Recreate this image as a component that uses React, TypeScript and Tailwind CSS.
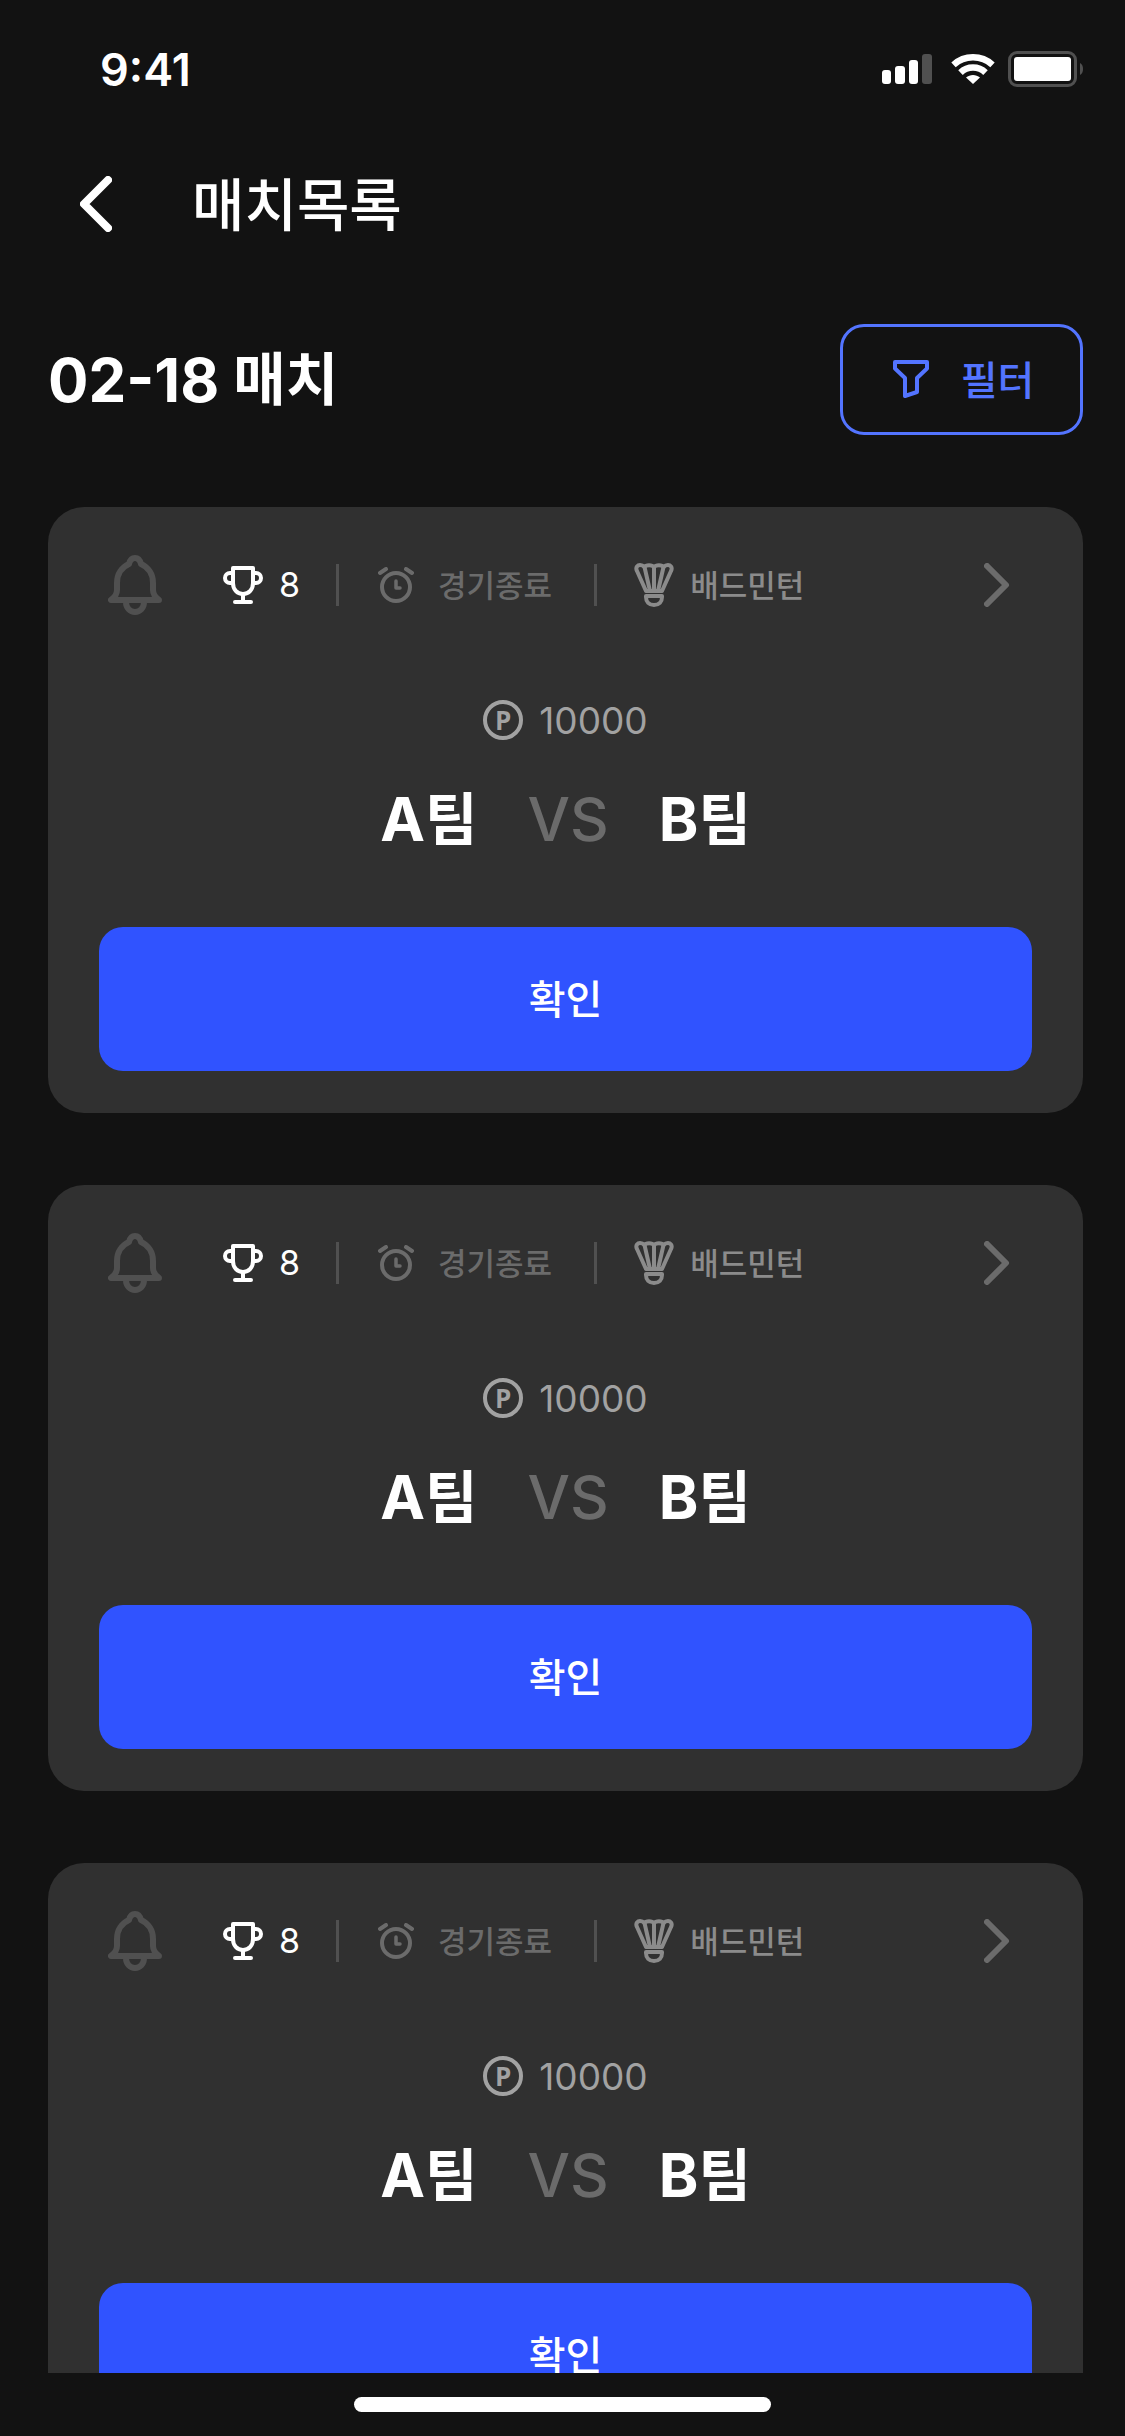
import type { ReactNode } from "react";

const matches = [
    { id: 1, rank: 8, status: "경기종료", sport: "배드민턴", point: 10000, home: "A", away: "B" },
    { id: 2, rank: 8, status: "경기종료", sport: "배드민턴", point: 10000, home: "A", away: "B" },
    { id: 3, rank: 8, status: "경기종료", sport: "배드민턴", point: 10000, home: "A", away: "B" },
];

type Match = (typeof matches)[number];

const SignalIcon = () => (
    <svg width="50" height="30" viewBox="0 0 50 30" fill="white">
        <rect x="0" y="16" width="9" height="14" rx="3" />
        <rect x="13" y="12" width="10" height="18" rx="3" />
        <rect x="27" y="6" width="9" height="24" rx="3" />
        <rect x="40" y="0" width="10" height="30" rx="3" fill="#505050" />
    </svg>
);

const WifiIcon = () => (
    <svg width="44" height="30" viewBox="0 0 44 30" fill="none" stroke="white" strokeWidth="6.500">
        <path d="M2.500 10.800C13.500 0.800 30.500 0.800 41.500 10.800" />
        <path d="M9.500 18.600C16.500 11.900 27.500 11.900 34.500 18.600" />
        <path d="M22 30L15 23.500C19 20 25 20 29 23.500Z" fill="white" stroke="none" />
    </svg>
);

const BatteryIcon = () => (
    <svg width="75" height="36" viewBox="0 0 75 36" fill="none">
        <rect x="1.500" y="1.500" width="66" height="33" rx="7.500" stroke="#505050" strokeWidth="3" />
        <rect x="6" y="6" width="57" height="24" rx="3" fill="white" />
        <path d="M72 12C74 13 75 15 75 18S74 23 72 24Z" fill="#505050" />
    </svg>
);

const BackIcon = () => (
    <svg width="32" height="56" viewBox="0 0 32 56" fill="none" stroke="white" strokeWidth="8" strokeLinecap="round" strokeLinejoin="round">
        <path d="M28 4L4 28L28 52" />
    </svg>
);

const FilterIcon = () => (
    <svg width="36" height="39" viewBox="0 0 36 39" fill="none" stroke="currentColor" strokeWidth="4" strokeLinejoin="round">
        <path d="M2 2H34V8.500L24 18V32L12 36V18L2 8.500Z" />
    </svg>
);

const BellIcon = () => (
    <svg width="54" height="60" viewBox="0 0 54 60" fill="none" stroke="#505050" strokeWidth="6" strokeLinejoin="round">
        <path d="M3 45H51C47 42 45 39 45 35V28C45 19 40 12 33 9C32 5 30 3 27 3S22 5 21 9C14 12 9 19 9 28V35C9 39 7 42 3 45Z" />
        <path d="M18 47C18 53 22 57 27 57S36 53 36 47" />
    </svg>
);

const TrophyIcon = () => (
    <svg width="40" height="38" viewBox="0 0 40 38" fill="none" stroke="white" strokeWidth="4" strokeLinecap="round" strokeLinejoin="round">
        <path d="M10 2H30V17C30 23.500 26 28 20 28S10 23.500 10 17Z" />
        <path d="M10 7H7A5 5 0 0 0 7 17H10" />
        <path d="M30 7H33A5 5 0 0 1 33 17H30" />
        <path d="M20 28V36M12 36H28" />
    </svg>
);

const AlarmIcon = () => (
    <svg width="36" height="36" viewBox="0 0 36 36" fill="none" stroke="#6b6b6b" strokeWidth="4" strokeLinecap="round" strokeLinejoin="round">
        <circle cx="18" cy="20" r="14" />
        <path d="M18 14V21H22" strokeWidth="3.500" />
        <path d="M2 6L8 2M28 2L34 6" />
    </svg>
);

const ShuttlecockIcon = () => (
    <svg width="40" height="46" viewBox="0 0 40 46" fill="none" stroke="#8b8b8b" strokeWidth="4" strokeLinecap="round" strokeLinejoin="round">
        <path d="M12 29L3 9C1 5 4 3 6 3C8 3 9.500 4 10.500 5C12 2.500 18 2.500 20 5C22 2.500 28 2.500 29.500 5C30.500 4 32 3 34 3C36 3 39 5 37 9L28 29Z" />
        <path d="M10.500 5L16 29M20 5V29M29.500 5L24 29" />
        <path d="M12 34H28V35C28 40 25 43 20 43S12 40 12 35Z" />
    </svg>
);

const NextIcon = () => (
    <svg width="26" height="44" viewBox="0 0 26 44" fill="none" stroke="#6b6b6b" strokeWidth="6" strokeLinecap="round" strokeLinejoin="round">
        <path d="M3 3L22 22L3 41" />
    </svg>
);

const Divider = () => <span className="h-[42px] w-[3px] shrink-0 bg-[#505050]" />;

const Team = ({ children }: { children: ReactNode }) => (
    <span className="flex items-center text-white font-bold">
        <span className="text-[60px]">{children}</span>
        <span className="text-[57px]">팀</span>
    </span>
);

const MatchCard = ({ match }: { match: Match }) => (
    <article className="shrink-0 rounded-[36px] bg-[#303030] px-[51px] pt-12 pb-[42px]">
        <div className="flex h-[60px] items-center pl-[9px] pr-[22px]">
            <button type="button" aria-label="알림">
                <BellIcon />
            </button>
            <div className="ml-[61px] mr-9 flex items-center gap-4 text-[34px] text-white">
                <TrophyIcon />
                <span className="font-['Inter',sans-serif]">{match.rank}</span>
            </div>
            <Divider />
            <div className="ml-[39px] mr-[42px] flex items-center gap-6 text-[31px] font-medium text-[#6b6b6b]">
                <AlarmIcon />
                <span>{match.status}</span>
            </div>
            <Divider />
            <div className="ml-[37px] flex items-center gap-4 text-[31px] font-medium text-[#8b8b8b]">
                <ShuttlecockIcon />
                <span>{match.sport}</span>
            </div>
            <button type="button" aria-label="상세보기" className="ml-auto">
                <NextIcon />
            </button>
        </div>

        <div className="mt-[84px] flex h-[42px] items-center justify-center gap-4 text-[37px] text-[#a2a2a2]">
            <span className="flex size-10 items-center justify-center rounded-full border-4 border-[#a2a2a2] text-[26px] font-bold">
                P
            </span>
            <span className="font-['Inter',sans-serif]">{match.point}</span>
        </div>

        <div className="mt-12 flex h-[60px] items-center justify-center gap-[50px] font-['Inter','Noto_Sans_CJK_KR',sans-serif]">
            <Team>{match.home}</Team>
            <span className="text-[60px] font-medium text-[#6b6b6b]">VS</span>
            <Team>{match.away}</Team>
        </div>

        <button type="button" className="mt-[78px] h-36 w-full rounded-3xl bg-[#3053ff] text-[40px] font-medium text-white">
            확인
        </button>
    </article>
);

const App = () => {
    return (
        <div className="flex h-screen flex-col overflow-hidden bg-[#121212] font-['Open_Sans','Noto_Sans_CJK_KR',sans-serif] leading-none text-white">
            <div className="flex h-[138px] shrink-0 items-center justify-between pl-[100px] pr-[42px]">
                <span className="font-['Inter',sans-serif] text-[45px] font-semibold">9:41</span>
                <div className="flex items-center">
                    <SignalIcon />
                    <span className="ml-[19px] mr-[13px]">
                        <WifiIcon />
                    </span>
                    <BatteryIcon />
                </div>
            </div>

            <header className="flex h-[132px] shrink-0 items-center gap-20 pl-20">
                <button type="button" aria-label="뒤로">
                    <BackIcon />
                </button>
                <h1 className="text-[57px] font-medium">매치목록</h1>
            </header>

            <main className="flex min-h-0 flex-1 flex-col overflow-hidden pl-12 pr-[42px] pt-[54px]">
                <div className="flex items-center justify-between">
                    <h2 className="flex items-center gap-3.5 font-['Inter','Noto_Sans_CJK_KR',sans-serif] font-bold">
                        <span className="text-[60px]">02-18</span>
                        <span className="text-[57px]">매치</span>
                    </h2>
                    <button
                        type="button"
                        className="flex h-[111px] w-[243px] items-center justify-center gap-8 rounded-3xl border-3 border-[#5374ff] pl-1 text-[40px] font-medium text-[#5374ff]"
                    >
                        <FilterIcon />
                        필터
                    </button>
                </div>
                <div className="mt-[72px] flex flex-col gap-[72px]">
                    {matches.map((match) => (
                        <MatchCard key={match.id} match={match} />
                    ))}
                </div>
            </main>

            <footer className="flex h-[63px] shrink-0 justify-center pt-6">
                <span className="h-[15px] w-[417px] rounded-full bg-white" />
            </footer>
        </div>
    );
};

export default App;
